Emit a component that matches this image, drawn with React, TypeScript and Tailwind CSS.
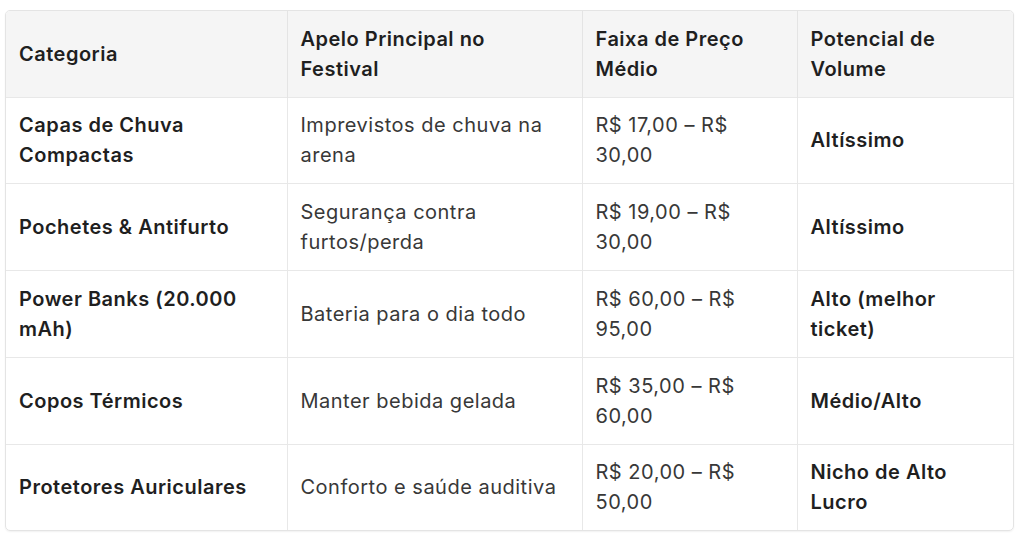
const rows = [
  { cat: "Capas de Chuva Compactas", apelo: "Imprevistos de chuva na arena", preco: "R$ 17,00 – R$ 30,00", vol: "Altíssimo", h: "h-[86px]" },
  { cat: "Pochetes & Antifurto", apelo: "Segurança contra furtos/perda", preco: "R$ 19,00 – R$ 30,00", vol: "Altíssimo", h: "h-[87px]" },
  { cat: "Power Banks (20.000 mAh)", apelo: "Bateria para o dia todo", preco: "R$ 60,00 – R$ 95,00", vol: "Alto (melhor ticket)", h: "h-[87px]" },
  { cat: "Copos Térmicos", apelo: "Manter bebida gelada", preco: "R$ 35,00 – R$ 60,00", vol: "Médio/Alto", h: "h-[87px]" },
  { cat: "Protetores Auriculares", apelo: "Conforto e saúde auditiva", preco: "R$ 20,00 – R$ 50,00", vol: "Nicho de Alto Lucro", h: "h-[86px]" },
];

export default function App() {
  return (
    <div className="w-[1024px] h-[539px] bg-white pt-[10px] pl-[5px] font-['Inter',sans-serif] text-[20px] leading-[30px] tracking-[0.5px]">
      <div className="w-[1009px] rounded-[5px] border border-[#e4e4e4] overflow-hidden shadow-[0_1px_2px_rgba(0,0,0,0.06)]">
        <table className="w-full table-fixed border-collapse">
          <colgroup>
            <col className="w-[281px]" />
            <col className="w-[295px]" />
            <col className="w-[215px]" />
            <col />
          </colgroup>
          <thead>
            <tr className="h-[86px] bg-[#f5f5f5] text-left text-[#1f1f1f]">
              <th className="pl-[13px] pr-[16px] font-semibold">Categoria</th>
              <th className="pl-[13px] pr-[16px] font-semibold border-l border-[#e4e4e4]">Apelo Principal no Festival</th>
              <th className="pl-[13px] pr-[16px] font-semibold border-l border-[#e4e4e4]">Faixa de Preço Médio</th>
              <th className="pl-[13px] pr-[16px] font-semibold border-l border-[#e4e4e4]">Potencial de Volume</th>
            </tr>
          </thead>
          <tbody>
            {rows.map((r) => (
              <tr key={r.cat} className={`${r.h} border-t border-[#e8e8e8]`}>
                <td className="pl-[13px] pr-[16px] font-semibold text-[#1f1f1f]">{r.cat}</td>
                <td className="pl-[13px] pr-[16px] text-[#383838] border-l border-[#e8e8e8]">{r.apelo}</td>
                <td className="pl-[13px] pr-[16px] text-[#383838] border-l border-[#e8e8e8]">{r.preco}</td>
                <td className="pl-[13px] pr-[16px] font-semibold text-[#1f1f1f] border-l border-[#e8e8e8]">{r.vol}</td>
              </tr>
            ))}
          </tbody>
        </table>
      </div>
    </div>
  );
}
